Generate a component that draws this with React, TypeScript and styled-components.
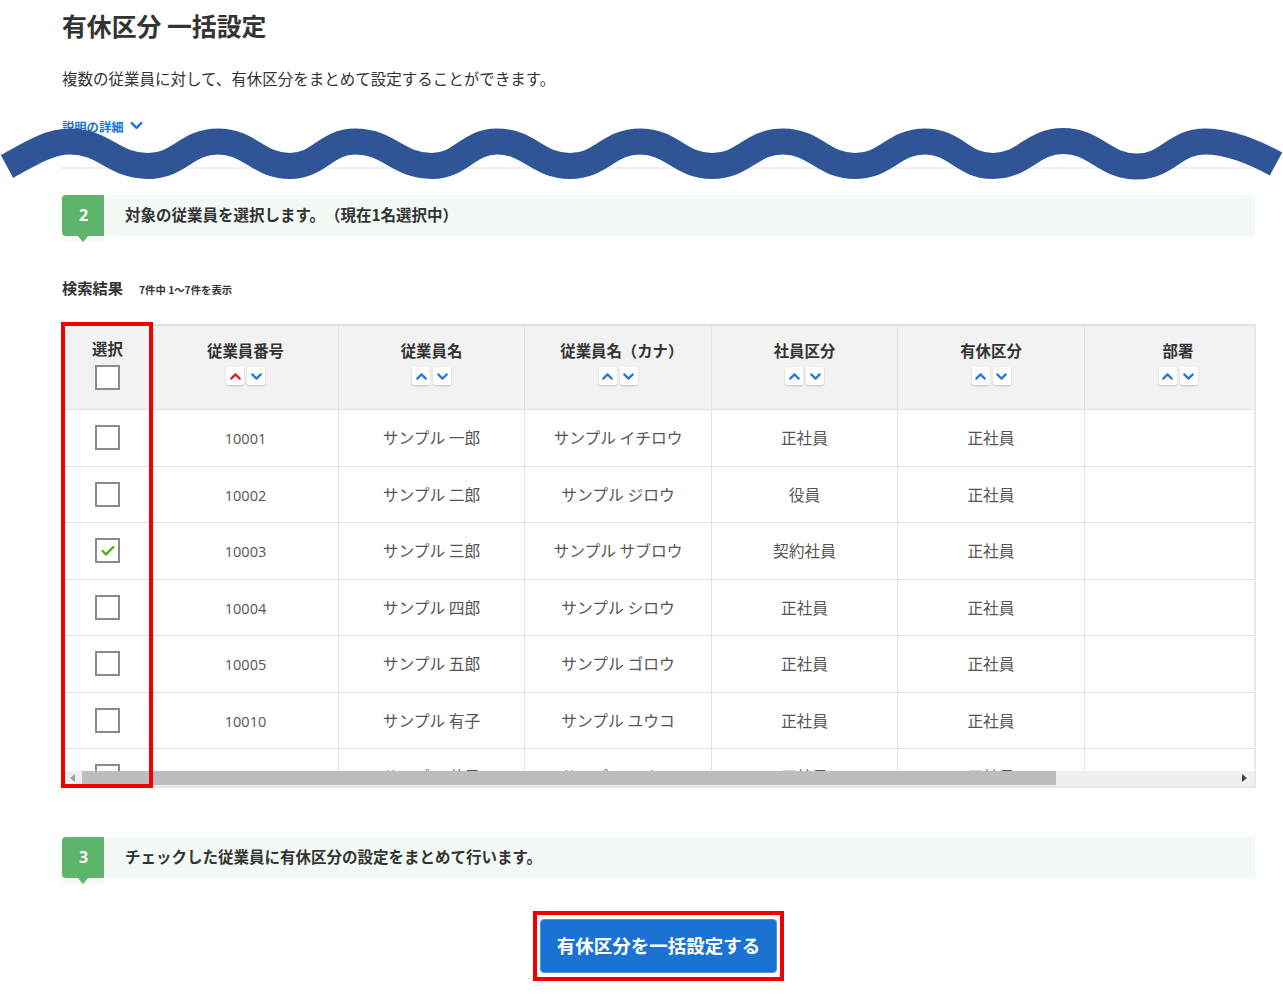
import type { FC } from "react";
import styled, { createGlobalStyle } from "styled-components";
import { ChevronDown, ChevronUp, Check } from "lucide-react";

const GlobalStyle = createGlobalStyle`
  html, body {
    margin: 0;
    padding: 0;
    background: #fff;
    font-family: "Noto Sans CJK JP", "Noto Sans", sans-serif;
    color: #333;
    overflow: hidden;
    text-spacing-trim: space-all;
  }
`;

const Page = styled.main`
  position: relative;
  width: 1283px;
  height: 998px;
  overflow: hidden;
`;

const Content = styled.div`
  display: flex;
  flex-direction: column;
  width: 1193px;
  margin-left: 62px;
`;

const Title = styled.h1`
  margin: 7px 0 0;
  font-size: 24.85px;
  line-height: 36px;
  font-weight: 700;
  color: #333;
`;

const Description = styled.p`
  margin: 23px 0 0;
  font-size: 15.5px;
  line-height: 24px;
  color: #333;
`;

const DetailLink = styled.a`
  display: flex;
  align-items: center;
  gap: 3px;
  margin-top: 27px;
  height: 20px;
  font-size: 12.3px;
  font-weight: 700;
  color: #1a73d8;

  svg {
    margin-top: -4px;
  }
`;

const Divider = styled.hr`
  width: 100%;
  height: 2px;
  margin: 30px 0 0;
  border: 0;
  background: #f0f0f0;
`;

const StepBar = styled.div<{ $top: number }>`
  display: flex;
  align-items: center;
  gap: 21px;
  box-sizing: border-box;
  height: 41px;
  padding-bottom: 4px;
  margin-top: ${(props) => props.$top}px;
  background: #f3f9f4;
  font-size: 15.5px;
  font-weight: 700;
  color: #333;
`;

const StepNumber = styled.span`
  position: relative;
  align-self: flex-start;
  display: flex;
  align-items: center;
  justify-content: center;
  box-sizing: border-box;
  width: 42px;
  height: 41px;
  padding: 0 0 2px 1px;
  border-radius: 4px 0 0 4px;
  background: #5cb56a;
  box-shadow: 0 6px 0 #f8f8f8;
  color: #fff;
  font-size: 16px;
  font-family: "Open Sans", sans-serif;

  &::after {
    content: "";
    position: absolute;
    left: 16px;
    top: 41px;
    border-left: 5px solid transparent;
    border-right: 5px solid transparent;
    border-top: 6px solid #5cb56a;
  }
`;

const ResultHead = styled.div`
  display: flex;
  align-items: baseline;
  gap: 16px;
  height: 24px;
  margin-top: 39px;
  line-height: 24px;
`;

const ResultTitle = styled.h2`
  margin: 0;
  font-size: 15.25px;
  font-weight: 700;
  color: #333;
`;

const ResultCount = styled.span`
  font-size: 10.35px;
  font-weight: 700;
  color: #333;
`;

const TableFrame = styled.div`
  position: relative;
  display: flex;
  flex-direction: column;
  height: 464px;
  margin: 25px -1px 0 0;
  box-sizing: border-box;
  border-top: 2px solid #e2e2e2;
  border-right: 2px solid #e8e8e8;
  border-left: 1px solid #e8e8e8;
`;

const TableClip = styled.div`
  flex: 1;
  min-height: 0;
  overflow: hidden;
`;

const Table = styled.table`
  width: 1307px;
  table-layout: fixed;
  border-collapse: separate;
  border-spacing: 0;
`;

const HeadCell = styled.th`
  box-sizing: border-box;
  height: 84px;
  padding: 14px 0 0;
  vertical-align: top;
  background: #f2f2f2;
  border-right: 1px solid #e2e2e2;
  border-bottom: 1px solid #e2e2e2;
  font-size: 15.4px;
  line-height: 20px;
  font-weight: 700;
  color: #333;
`;

const SelectHeadCell = styled(HeadCell)`
  padding: 12px 1px 0 0;
  border-right: 0;
`;

// a closing bracket at the end of the label takes no room when centred
const HeadLabel = styled.span<{ $trimEnd?: boolean }>`
  display: block;
  margin-right: ${(props) => (props.$trimEnd ? "-7.7px" : "0")};
`;

const Cell = styled.td`
  box-sizing: border-box;
  height: 56.5px;
  padding: 0;
  text-align: center;
  vertical-align: middle;
  border-right: 1px solid #e2e2e2;
  border-bottom: 1px solid #e2e2e2;
  font-size: 15.75px;
  color: #555;
`;

const SelectCell = styled(Cell)`
  padding-right: 1px;
  border-right: 0;
`;

const NumberText = styled.span`
  font-family: "Open Sans", sans-serif;
  font-size: 14.5px;
`;

const Box = styled.span`
  display: flex;
  align-items: center;
  justify-content: center;
  box-sizing: border-box;
  width: 25px;
  height: 25px;
  margin: 0 auto;
  border: 2px solid #8a8a8a;
  background: #fff;
  color: #4caf0f;
`;

const HeadBox = styled(Box)`
  margin-top: 7px;
`;

const SortGroup = styled.span`
  display: flex;
  justify-content: center;
  gap: 3px;
  margin-top: 7px;
`;

const SortButton = styled.span<{ $active?: boolean }>`
  display: flex;
  align-items: center;
  justify-content: center;
  width: 18px;
  height: 18px;
  border-radius: 2px;
  background: #fff;
  box-shadow: 0 1px 2px rgba(0, 0, 0, 0.2);
  color: ${(props) => (props.$active ? "#f01414" : "#1f78e0")};
`;

const ScrollBar = styled.div`
  display: flex;
  align-items: center;
  flex: none;
  height: 17px;
  box-sizing: border-box;
  padding-bottom: 2px;
  background: #f0f0f0;
  border-bottom: 2px solid #e6e6e6;
`;

const ScrollArrow = styled.span<{ $right?: boolean }>`
  flex: none;
  width: 0;
  height: 0;
  margin: ${(props) => (props.$right ? "0 7px 0 auto" : "0 7px 0 7px")};
  border-top: 4px solid transparent;
  border-bottom: 4px solid transparent;
  border-left: ${(props) => (props.$right ? "5px solid #444" : "0")};
  border-right: ${(props) => (props.$right ? "0" : "5px solid #a0a0a0")};
`;

const ScrollThumb = styled.span`
  flex: none;
  width: 974px;
  height: 14px;
  background: #bdbdbd;
`;

const Highlight = styled.div`
  position: absolute;
  left: -2px;
  top: -4px;
  width: 92px;
  height: 466px;
  box-sizing: border-box;
  border: 4px solid #f00000;
  pointer-events: none;
`;

const ActionRow = styled.div`
  display: flex;
  justify-content: center;
  margin-top: 33px;
`;

const ActionFrame = styled.div`
  box-sizing: border-box;
  width: 251px;
  height: 70px;
  padding: 4px 3px;
  border: 4px solid #f00000;
`;

const ActionButton = styled.button`
  display: block;
  width: 100%;
  height: 100%;
  padding: 0 0 2px;
  border: 1px solid #4d94dc;
  border-radius: 4px;
  background: #1a73d2;
  color: #fff;
  font-family: inherit;
  font-size: 18.5px;
  font-weight: 700;
`;

const WaveLayer = styled.svg`
  position: absolute;
  left: 0;
  top: 0;
  pointer-events: none;
`;

const wavePoints: [number, number][] = [
  [70, 141.5], [148, 166], [218, 141.5], [290, 166], [355, 141.5], [432, 166],
  [497, 141.5], [570, 166], [640, 141.5], [712, 166], [783, 141.5], [855, 166],
  [925, 141.5], [993, 166], [1063, 141], [1137, 166.5], [1205, 141.5],
];

const buildWave = () => {
  let d = "M7 166.5 C28 155 48 141.5 70 141.5";
  for (let i = 1; i < wavePoints.length; i++) {
    const [x0, y0] = wavePoints[i - 1];
    const [x1, y1] = wavePoints[i];
    const mid = (x1 - x0) * 0.45;
    d += ` C${x0 + mid} ${y0} ${x1 - mid} ${y1} ${x1} ${y1}`;
  }
  return d + " C1230 141.5 1254 152 1276 164";
};

const Wave: FC = () => (
  <WaveLayer width="1283" height="200" viewBox="0 0 1283 200">
    <path d={buildWave()} fill="none" stroke="#2f5597" strokeWidth="26" />
  </WaveLayer>
);

const Sort: FC<{ active?: boolean }> = ({ active }) => (
  <SortGroup>
    <SortButton $active={active}>
      <ChevronUp size={17} strokeWidth={3} />
    </SortButton>
    <SortButton>
      <ChevronDown size={17} strokeWidth={3} />
    </SortButton>
  </SortGroup>
);

const employees = [
  { no: "10001", name: "サンプル 一郎", kana: "サンプル イチロウ", type: "正社員" },
  { no: "10002", name: "サンプル 二郎", kana: "サンプル ジロウ", type: "役員" },
  { no: "10003", name: "サンプル 三郎", kana: "サンプル サブロウ", type: "契約社員", checked: true },
  { no: "10004", name: "サンプル 四郎", kana: "サンプル シロウ", type: "正社員" },
  { no: "10005", name: "サンプル 五郎", kana: "サンプル ゴロウ", type: "正社員" },
  { no: "10010", name: "サンプル 有子", kana: "サンプル ユウコ", type: "正社員" },
  { no: "10011", name: "サンプル 花子", kana: "サンプル ハナコ", type: "正社員" },
];

const columns = [
  { label: "従業員番号", width: 186, active: true },
  { label: "従業員名", width: 186 },
  { label: "従業員名（カナ）", width: 187, trimEnd: true },
  { label: "社員区分", width: 186 },
  { label: "有休区分", width: 187 },
  { label: "部署", width: 187 },
];

export default function App() {
  return (
    <Page>
      <GlobalStyle />
      <Content>
        <Title>有休区分 一括設定</Title>
        <Description>
          複数の従業員に対して、有休区分をまとめて設定することができます。
        </Description>
        <DetailLink>
          説明の詳細
          <ChevronDown size={19} strokeWidth={3} />
        </DetailLink>
        <Divider />

        <StepBar $top={26}>
          <StepNumber>2</StepNumber>
          対象の従業員を選択します。（現在1名選択中）
        </StepBar>

        <ResultHead>
          <ResultTitle>検索結果</ResultTitle>
          <ResultCount>7件中 1〜7件を表示</ResultCount>
        </ResultHead>

        <TableFrame>
          <TableClip>
            <Table>
              <colgroup>
                <col width={90} />
                {columns.map((column) => (
                  <col key={column.label} width={column.width} />
                ))}
                <col width={98} />
              </colgroup>
              <thead>
                <tr>
                  <SelectHeadCell>
                    選択
                    <HeadBox />
                  </SelectHeadCell>
                  {columns.map((column) => (
                    <HeadCell key={column.label}>
                      <HeadLabel $trimEnd={column.trimEnd}>{column.label}</HeadLabel>
                      <Sort active={column.active} />
                    </HeadCell>
                  ))}
                  <HeadCell />
                </tr>
              </thead>
              <tbody>
                {employees.map((row) => (
                  <tr key={row.no}>
                    <SelectCell>
                      <Box>
                        {row.checked && <Check size={16} strokeWidth={3.6} />}
                      </Box>
                    </SelectCell>
                    <Cell>
                      <NumberText>{row.no}</NumberText>
                    </Cell>
                    <Cell>{row.name}</Cell>
                    <Cell>{row.kana}</Cell>
                    <Cell>{row.type}</Cell>
                    <Cell>正社員</Cell>
                    <Cell />
                    <Cell />
                  </tr>
                ))}
              </tbody>
            </Table>
          </TableClip>
          <ScrollBar>
            <ScrollArrow />
            <ScrollThumb />
            <ScrollArrow $right />
          </ScrollBar>
          <Highlight />
        </TableFrame>

        <StepBar $top={49}>
          <StepNumber>3</StepNumber>
          チェックした従業員に有休区分の設定をまとめて行います。
        </StepBar>

        <ActionRow>
          <ActionFrame>
            <ActionButton>有休区分を一括設定する</ActionButton>
          </ActionFrame>
        </ActionRow>
      </Content>
      <Wave />
    </Page>
  );
}
